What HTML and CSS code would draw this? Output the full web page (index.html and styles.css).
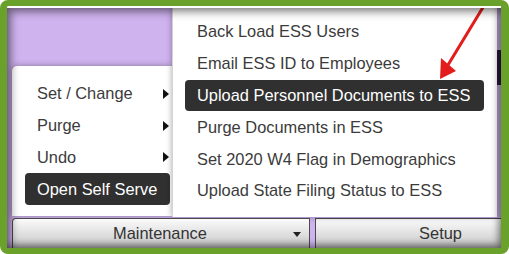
FILE: index.html
```html
<!DOCTYPE html>
<html lang="en">
<head>
  <meta charset="UTF-8" />
  <title>Maintenance menu</title>
  <link rel="stylesheet" href="styles.css">
</head>
<body>
  <div class="frame">
    <div class="screen">
      <div class="desk">
        <ul class="menu main-menu">
          <li class="item">Set / Change <span class="more"></span></li>
          <li class="item">Purge <span class="more"></span></li>
          <li class="item">Undo <span class="more"></span></li>
          <li class="item active">Open Self Serve</li>
        </ul>

        <ul class="menu sub-menu">
          <li class="item">Back Load ESS Users</li>
          <li class="item">Email ESS ID to Employees</li>
          <li class="item active">Upload Personnel Documents to ESS</li>
          <li class="item">Purge Documents in ESS</li>
          <li class="item">Set 2020 W4 Flag in Demographics</li>
          <li class="item">Upload State Filing Status to ESS</li>
        </ul>

        <div class="edge-tab"></div>

        <svg class="pointer" width="70" height="80" viewBox="0 0 70 80">
          <line x1="58" y1="-4" x2="21" y2="57" stroke="#e31c1c" stroke-width="3" stroke-linecap="round" />
          <polygon points="13,71 14,50 29,63" fill="#e31c1c" />
        </svg>
      </div>

      <div class="toolbar">
        <div class="tool maint">Maintenance <span class="caret"></span></div>
        <div class="tool setup">Setup</div>
      </div>
    </div>
  </div>
</body>
</html>
```

FILE: styles.css
```css
html, body {
  margin: 0;
  padding: 0;
}

body {
  font-family: "Liberation Sans", Arial, sans-serif;
  background: #ffffff;
}

.frame {
  width: 509px;
  height: 254px;
  box-sizing: border-box;
  border: solid #6aa12a;
  border-width: 6px 8px 6px 7px;
  border-radius: 8px;
  background: #ffffff;
  padding-top: 2px;
}

.screen {
  position: relative;
  height: 100%;
  display: flex;
  flex-direction: column;
  background: #cfb3ef;
  overflow: hidden;
}

/* darkened edges of the captured window */
.screen::after {
  content: "";
  position: absolute;
  inset: 0;
  pointer-events: none;
  box-shadow: inset 4px 4px 9px rgba(0, 0, 0, 0.45), inset -3px -3px 7px rgba(0, 0, 0, 0.4);
}

.desk {
  position: relative;
  flex: 1;
}

.menu {
  list-style: none;
  margin: 0;
  background: #ffffff;
  color: #3b3b3b;
  font-size: 16.4px;
  box-shadow: 0 0 6px rgba(0, 0, 0, 0.35);
}

.main-menu {
  position: absolute;
  left: 5px;
  top: 58px;
  width: 160px;
  height: 150px;
  box-sizing: border-box;
  padding: 12px 2px 0 13px;
  border-radius: 5px 0 0 0;
}

.sub-menu {
  position: absolute;
  left: 165px;
  top: 0;
  width: 325px;
  height: 209px;
  box-sizing: border-box;
  padding: 8px 13px 0 12px;
  border-left: 1px solid #d4d4d4;
}

.item {
  display: flex;
  align-items: center;
  height: 31.8px;
  padding: 0 12px;
  border-radius: 4px;
  white-space: nowrap;
}

.main-menu .item {
  padding-right: 1px;
}

.item.active {
  background: #303030;
  color: #ffffff;
}

.more {
  margin-left: auto;
  width: 0;
  height: 0;
  border-top: 5px solid transparent;
  border-bottom: 5px solid transparent;
  border-left: 6px solid #111111;
}

.edge-tab {
  position: absolute;
  right: 0;
  top: 42px;
  width: 4px;
  height: 35px;
  background: #2b1846;
}

.pointer {
  position: absolute;
  left: 420px;
  top: 0;
  overflow: visible;
}

.toolbar {
  display: flex;
  height: 30px;
  padding-left: 5px;
}

.tool {
  display: flex;
  align-items: center;
  justify-content: center;
  box-sizing: border-box;
  font-size: 16.4px;
  color: #333333;
  background: linear-gradient(#fbfbfb, #d6d6d6 70%, #b9b9b9);
  border: 1px solid #4a4a4a;
  border-bottom: none;
}

.maint {
  position: relative;
  width: 298px;
  border-radius: 4px 0 0 0;
  padding-right: 2px;
}

.caret {
  position: absolute;
  right: 8px;
  top: 13px;
  width: 0;
  height: 0;
  border-left: 4px solid transparent;
  border-right: 4px solid transparent;
  border-top: 5px solid #222222;
}

.setup {
  flex: 1;
  margin-left: 5px;
  padding-left: 64px;
  border-right: none;
}
```
